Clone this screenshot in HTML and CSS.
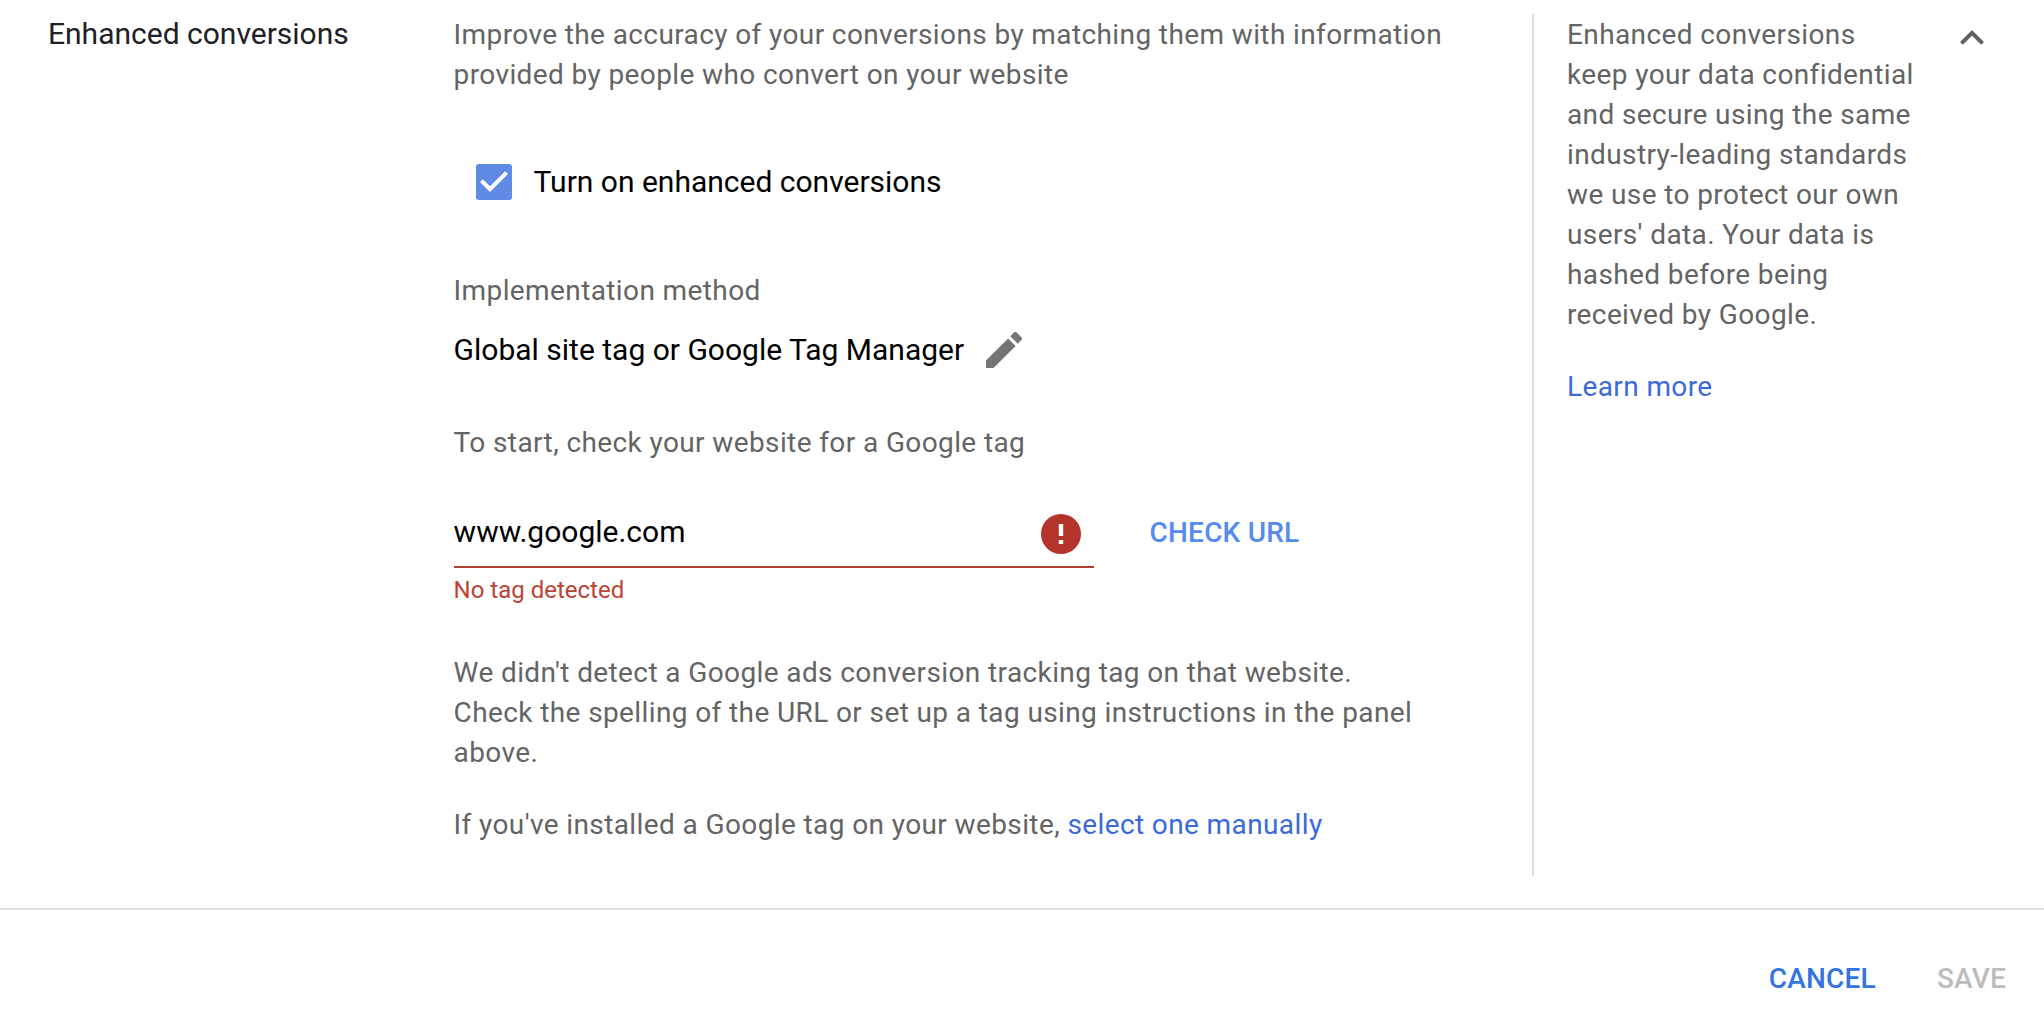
FILE: index.html
```html
<!DOCTYPE html>
<html lang="en">
<head>
<meta charset="utf-8">
<title>Enhanced conversions</title>
<link rel="stylesheet" href="styles.css">
</head>
<body>
<section class="panel">
  <h2 class="panel-title">Enhanced conversions</h2>
  <div class="content">
    <p class="description">Improve the accuracy of your conversions by matching them with information provided by people who convert on your website</p>
    <div class="checkbox-row">
      <svg class="checkbox" viewBox="3 3 18 18" role="img" aria-label="Checked"><rect class="checkbox-box" x="3" y="3" width="18" height="18" rx="1.5"/><path class="checkbox-mark" d="M10 17l-5-5 1.41-1.41L10 14.17l7.59-7.59L19 8z"/></svg>
      <span class="strong">Turn on enhanced conversions</span>
    </div>
    <p class="method-label">Implementation method</p>
    <div class="method">
      <span class="strong">Global site tag or Google Tag Manager</span>
      <svg class="edit" viewBox="3 3 18 18" role="img" aria-label="Edit"><path d="M3 17.25V21h3.75L17.81 9.94l-3.75-3.75L3 17.25zM20.71 7.04a1 1 0 0 0 0-1.41l-2.34-2.34a1 1 0 0 0-1.41 0l-1.83 1.83 3.75 3.75 1.83-1.83z"/></svg>
    </div>
    <p class="prompt">To start, check your website for a Google tag</p>
    <div class="url-row">
      <div class="field">
        <span class="strong">www.google.com</span>
        <svg class="error-icon" viewBox="2 2 20 20" role="img" aria-label="Error"><path d="M12 2a10 10 0 1 0 0 20 10 10 0 0 0 0-20zm1.1 15h-2.2v-2h2.2v2zm0-4h-2.2V7h2.2v6z"/></svg>
      </div>
      <a class="button check-url">CHECK URL</a>
    </div>
    <p class="error-text">No tag detected</p>
    <p class="result">We didn't detect a Google ads conversion tracking tag on that website. Check the spelling of the URL or set up a tag using instructions in the panel above.</p>
    <p class="manual">If you've installed a Google tag on your website, <a class="link">select one manually</a></p>
  </div>
  <aside class="help">
    <div class="help-text">
      <p>Enhanced conversions keep your data confidential and secure using the same industry-leading standards we use to protect our own users' data. Your data is hashed before being received by Google.</p>
      <p class="learn"><a class="link">Learn more</a></p>
    </div>
    <svg class="chevron" viewBox="6 8 12 7.5" role="img" aria-label="Collapse"><path d="M12 8l-6 6 1.41 1.41L12 10.83l4.59 4.58L18 14z"/></svg>
  </aside>
</section>
<footer class="actions">
  <a class="button cancel">CANCEL</a>
  <a class="button save">SAVE</a>
</footer>
</body>
</html>
```
FILE: styles.css
```css
* { box-sizing: border-box; }
body {
  margin: 0;
  background: #fff;
  color: #646464;
  font: 400 28px/40px Roboto, sans-serif;
  letter-spacing: 0.39px;
}
p, h2 { margin: 0; }
svg { display: block; flex: none; }

.panel {
  display: flex;
  height: 908px;
  padding: 14px 0 32px 48px;
}
.panel-title {
  width: 405.6px;
  color: #202124;
  font-size: 30px;
  font-weight: 400;
  letter-spacing: 0;
}
.content { width: 1078.4px; padding: 1px 84px 0 0; }
.strong { color: #000; font-size: 30px; letter-spacing: 0; }
.link { color: #3b6ad8; }

.checkbox-row {
  display: flex;
  align-items: center;
  gap: 22px;
  margin-top: 67px;
  padding-left: 22px;
}
.checkbox { width: 36px; height: 36px; }
.checkbox-box { fill: #5f8be5; }
.checkbox-mark { fill: #fff; }

.method-label { margin-top: 69px; }
.method {
  display: flex;
  align-items: center;
  gap: 21.5px;
  margin-top: 19px;
}
.edit { width: 36px; height: 36px; fill: #757575; }
.prompt { margin-top: 53px; }

.url-row { display: flex; gap: 55.6px; margin-top: 49px; }
.field {
  display: flex;
  justify-content: space-between;
  width: 640.4px;
  height: 56px;
  padding-right: 12.6px;
  border-bottom: 2px solid #b04235;
}
.error-icon { width: 40px; height: 40px; margin-top: 2px; fill: #b4332b; }
.button { font-weight: 500; letter-spacing: 0.2px; }
.check-url { padding-top: 1px; color: #558aee; }
.error-text {
  margin-top: 7px;
  color: #bb4437;
  font-size: 24px;
  line-height: 30px;
  letter-spacing: 0;
}
.result { max-width: 965px; margin-top: 48px; }
.manual { margin-top: 32px; }

.help {
  display: flex;
  flex: none;
  align-items: flex-start;
  width: 512px;
  height: 862px;
  padding-left: 33px;
  border-left: 2px solid #dadce0;
}
.help-text { width: 353px; padding-top: 1px; }
.learn { margin-top: 32px; }
.chevron { width: 24px; height: 15px; margin: 16px 0 0 40px; fill: #616161; }

.actions {
  display: flex;
  justify-content: flex-end;
  gap: 61px;
  height: 112px;
  padding: 49px 38px 0 0;
  border-top: 2px solid #e0e0e0;
}
.cancel { color: #3374e0; }
.save { color: #bdbdbd; }
```
